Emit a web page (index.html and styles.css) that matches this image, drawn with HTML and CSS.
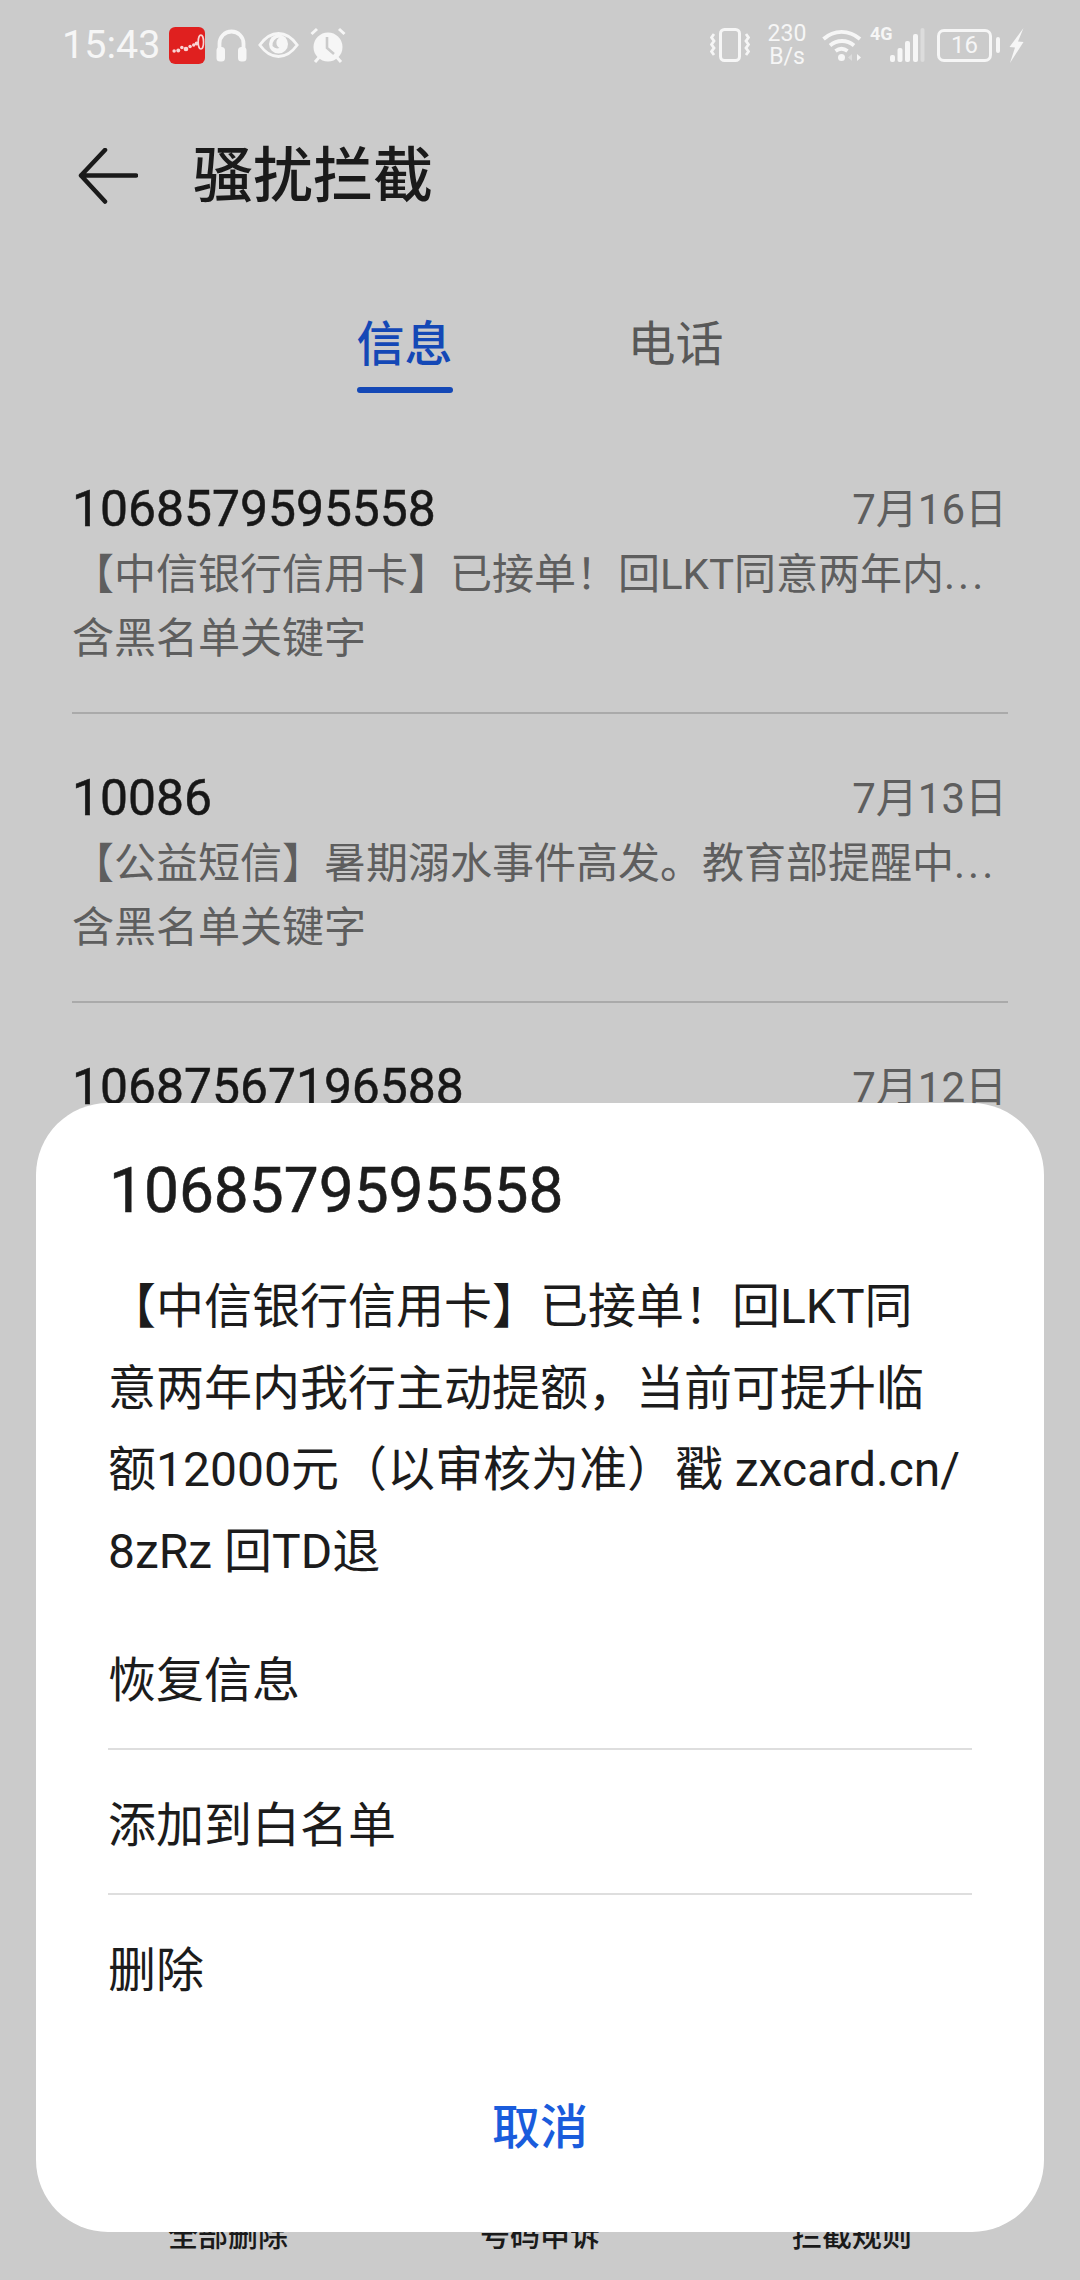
FILE: index.html
```html
<!DOCTYPE html>
<html lang="zh-CN">
<head>
<meta charset="utf-8">
<title>骚扰拦截</title>
<link rel="stylesheet" href="styles.css">
</head>
<body>
<div class="page">
  <header class="status">
    <div class="status-left">
      <span class="time">15:43</span>
      <svg class="ic-app" width="36" height="37" viewBox="0 0 35 37" preserveAspectRatio="none"><rect width="35" height="37" rx="6" fill="#e0201f"/><g fill="#f9d4d4"><circle cx="5" cy="24" r="1.700"/><circle cx="9" cy="23.500" r="1.900"/><circle cx="12.500" cy="20.500" r="1.700"/><circle cx="16.500" cy="22" r="2.300"/><circle cx="20.500" cy="19.500" r="1.700"/><circle cx="24" cy="18" r="1.700"/><circle cx="27" cy="16.500" r="2.100"/></g><ellipse cx="31" cy="15" rx="2.600" ry="7" fill="none" stroke="#f9d4d4" stroke-width="1.600"/></svg>
      <svg class="ic-head" width="31" height="34" viewBox="0 0 31 34"><path d="M3.500 22V15.500a12 12 0 0 1 24 0V22" fill="none" stroke="#f6f6f6" stroke-width="3.800"/><rect x="0.500" y="19" width="8.500" height="14.500" rx="3.500" fill="#f6f6f6"/><rect x="22" y="19" width="8.500" height="14.500" rx="3.500" fill="#f6f6f6"/></svg>
      <svg class="ic-eye" width="41" height="26" viewBox="0 0 41 26"><path d="M1.800 13C7.500 5 13.500 1.500 20.500 1.500S33.500 5 39.200 13C33.500 21 27.500 24.500 20.500 24.500S7.500 21 1.800 13z" fill="none" stroke="#f6f6f6" stroke-width="2.800"/><circle cx="20.500" cy="12" r="9.500" fill="#f6f6f6"/><path d="M14.500 14a7.500 7.500 0 0 1 7-8.500 6 6 0 0 0 0 10.500 6.500 6.500 0 0 1-7-2z" fill="#cbcbcb"/></svg>
      <svg class="ic-alarm" width="36" height="36" viewBox="0 0 36 36"><circle cx="18" cy="20" r="14.500" fill="#f6f6f6"/><path d="M17 10v11l7 6" fill="none" stroke="#cbcbcb" stroke-width="2.600"/><path d="M1.500 7 7 2M34.500 7 29 2M5 35l4-4.500M31 35l-4-4.500" stroke="#f6f6f6" stroke-width="3" fill="none"/></svg>
    </div>
    <div class="status-right">
      <svg class="ic-vib" width="40" height="34" viewBox="0 0 40 34"><rect x="10.500" y="1.500" width="19" height="31" rx="4" fill="none" stroke="#f6f6f6" stroke-width="3"/><path d="M4 6 1.500 9.500 4 13l-2.500 3.500L4 20l-2.500 3.500L4 27M36 6l2.500 3.500L36 13l2.500 3.500L36 20l2.500 3.500L36 27" fill="none" stroke="#f6f6f6" stroke-width="2.800"/></svg>
      <span class="speed"><span>230</span><span>B/s</span></span>
      <svg class="ic-wifi" width="40" height="34" viewBox="0 0 40 34"><path d="M1.500 11C12 1.500 27 1.500 38 11M8 17.500c7-6 17-6 24 0M13.500 23c4-3 8-3 12 0" fill="none" stroke="#f6f6f6" stroke-width="3.800"/><circle cx="19.500" cy="29.500" r="3.500" fill="#f6f6f6"/><path d="M30 26v7l-4-3.500z" fill="#dcdcdc"/><path d="M35 26v7l4-3.500z" fill="#f6f6f6"/></svg>
      <div class="net">
        <span class="net-g">4G</span>
        <svg width="35" height="34" viewBox="0 0 35 34"><g fill="#f6f6f6"><rect x="0" y="27" width="5" height="7" rx="2"/><rect x="7.500" y="20" width="5" height="14" rx="2"/><rect x="15" y="13" width="5" height="21" rx="2"/><rect x="23" y="6" width="5" height="28" rx="2"/></g><rect x="30.500" y="0" width="4" height="34" rx="2" fill="#dcdcdc"/></svg>
      </div>
      <div class="battery"><span class="cell">16</span><span class="nub"></span></div>
      <svg class="ic-bolt" width="15" height="35" viewBox="0 0 15 35"><path d="M14.500 0 .5 19l5.500.5L1 35l13.500-21-5.500-.5z" fill="#f6f6f6"/></svg>
    </div>
  </header>

  <div class="appbar">
    <svg class="back" width="60" height="58" viewBox="0 0 60 58"><path d="M27 2 3 27.500l24 26M3 27.500h55" fill="none" stroke="#1a1a1a" stroke-width="4.500" stroke-linecap="round" stroke-linejoin="round"/></svg>
    <h1 class="title">骚扰拦截</h1>
  </div>

  <nav class="tabs">
    <div class="tab tab-on">信息</div>
    <div class="tab">电话</div>
  </nav>

  <main class="list">
    <article class="row">
      <div class="row-head"><span class="num">1068579595558</span><span class="date">7月16日</span></div>
      <p class="msg">【中信银行信用卡】已接单！回LKT同意两年内<span class="dots">...</span></p>
      <p class="msg">含黑名单关键字</p>
    </article>
    <article class="row">
      <div class="row-head"><span class="num">10086</span><span class="date">7月13日</span></div>
      <p class="msg">【公益短信】暑期溺水事件高发。教育部提醒中<span class="dots">...</span></p>
      <p class="msg">含黑名单关键字</p>
    </article>
    <article class="row row-last">
      <div class="row-head"><span class="num">10687567196588</span><span class="date">7月12日</span></div>
    </article>
  </main>

  <footer class="toolbar">
    <span class="tool">全部删除</span>
    <span class="tool">号码申诉</span>
    <span class="tool">拦截规则</span>
  </footer>

  <section class="dialog">
    <h2 class="d-title">1068579595558</h2>
    <p class="d-body">【中信银行信用卡】已接单！回LKT同<br>意两年内我行主动提额，当前可提升临<br>额12000元（以审核为准）戳 zxcard.cn/<br>8zRz 回TD退</p>
    <ul class="d-menu">
      <li class="d-item">恢复信息</li>
      <li class="d-item">添加到白名单</li>
      <li class="d-item">删除</li>
    </ul>
    <div class="d-cancel">取消</div>
  </section>
</div>
</body>
</html>
```

FILE: styles.css
```css
* { box-sizing: border-box; margin: 0; padding: 0; }
html, body { width: 1080px; height: 2280px; overflow: hidden; }
body { background: #cbcbcb; font-family: Roboto, "Noto Sans CJK SC", sans-serif; }
.page { position: relative; width: 1080px; height: 2280px; display: flex; flex-direction: column; overflow: hidden; }

.status { height: 90px; padding: 0 56px 0 62px; display: flex; align-items: center; justify-content: space-between; }
.status-left { display: flex; align-items: center; gap: 11px; }
.status-right { display: flex; align-items: center; }
.time { font-size: 39.500px; color: #f6f6f6; width: 96px; line-height: 44px; }
.speed { display: flex; flex-direction: column; align-items: center; font-size: 23px; line-height: 23px; color: #f6f6f6; width: 38px; margin-left: 18px; }
.ic-wifi { margin-left: 16px; }
.net { display: flex; align-items: flex-start; margin-left: 8px; }
.net-g { font-size: 18px; font-weight: 700; color: #f6f6f6; width: 20px; line-height: 20px; margin-top: -4px; }
.battery { display: flex; align-items: center; gap: 4px; margin-left: 12px; }
.cell { width: 55px; height: 33px; border: 3px solid #f6f6f6; border-radius: 7px; font-size: 24px; line-height: 27px; color: #f6f6f6; text-align: center; }
.nub { width: 4px; height: 16px; border-radius: 2px; background: #f6f6f6; }
.ic-bolt { margin-left: 9px; }

.appbar { height: 172px; padding: 2px 0 0 78px; display: flex; align-items: center; gap: 55px; }
.title { font-size: 60px; line-height: 70px; font-weight: 500; color: #1a1a1a; }

.tabs { display: flex; justify-content: center; gap: 175px; height: 163px; }
.tab { width: 96px; height: 131px; padding-top: 50px; text-align: center; font-size: 48px; line-height: 66px; color: #585858; position: relative; }
.tab-on { font-weight: 500; color: #1448b6; }
.tab-on::after { content: ""; position: absolute; left: 0; right: 0; top: 125px; height: 6px; border-radius: 3px; background: #1448b6; }

.list { flex: 1; padding: 0 72px; overflow: hidden; min-height: 0; }
.row { height: 289px; padding-top: 53px; border-bottom: 2px solid #aaaaaa; }
.row-last { border-bottom: 0; }
.row-head { display: flex; align-items: center; justify-content: space-between; height: 62px; padding-right: 1px; }
.num { font-size: 49.800px; font-weight: 400; -webkit-text-stroke: 0.5px #171717; color: #171717; }
.date { font-size: 42px; color: #5e5e5e; margin-bottom: 7px; }
.msg { font-size: 42px; line-height: 64px; color: #5e5e5e; white-space: nowrap; }
.row-head + .msg { margin-top: 3px; }
.dots { letter-spacing: 3px; }

.toolbar { height: 61px; flex: none; display: flex; padding: 0 72px; }
.tool { width: 312px; text-align: center; font-size: 30px; line-height: 34px; font-weight: 500; color: #1a1a1a; }

.dialog { position: absolute; left: 36px; top: 1103px; width: 1008px; height: 1129px; background: #fff; border-radius: 72px; padding: 52px 72px 0; }
.d-title { font-size: 62.200px; line-height: 72px; font-weight: 400; -webkit-text-stroke: 0.6px #1c1c1c; color: #1c1c1c; padding-left: 1px; }
.d-body { font-size: 48px; line-height: 81.500px; color: #1c1c1c; margin-top: 39px; white-space: nowrap; }
.d-menu { list-style: none; margin-top: 13px; }
.d-item { height: 145px; font-size: 48px; line-height: 151px; color: #1c1c1c; border-bottom: 2px solid #dedede; }
.d-item:last-child { border-bottom: 0; }
.d-cancel { text-align: center; font-size: 48px; line-height: 70px; font-weight: 500; color: #1a5cdc; margin-top: 53px; }
```
